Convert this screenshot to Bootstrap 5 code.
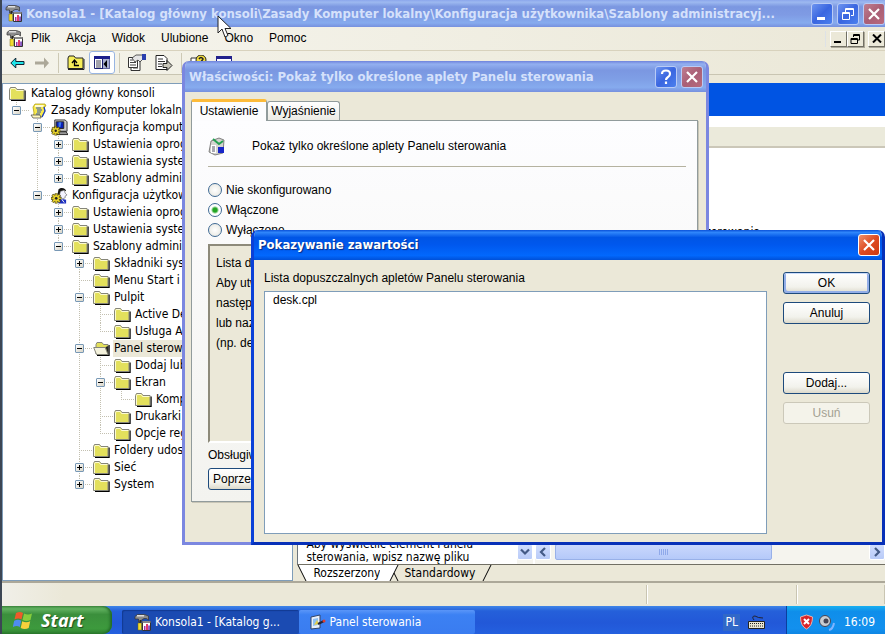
<!DOCTYPE html>
<html lang="pl">
<head>
<meta charset="utf-8">
<title>Konsola1</title>
<meta name="viewport" content="width=device-width, initial-scale=1">
<link href="https://cdn.jsdelivr.net/npm/bootstrap@5.3.0/dist/css/bootstrap.min.css" rel="stylesheet">
<style>
:root{--face:#ebe8d8;--field:#7f9db9}
body{font-family:"DejaVu Sans Condensed","DejaVu Sans",sans-serif;font-size:12px;line-height:17px;color:#000;background:#fff}
button,select{font:inherit;color:inherit}
svg{flex:none;display:block}
.desk{border-left:2px solid #3c4654}
.ms-sans{font-family:"Liberation Sans",sans-serif;font-size:12px}
.caption{font-family:"DejaVu Sans Condensed","DejaVu Sans",sans-serif;font-weight:700;font-size:13px;line-height:20px;white-space:nowrap;color:#d5e1fb}
.title-main{height:27px;padding:0 0 0 3px;gap:4px;background:linear-gradient(#8ba6ec,#9db9f0 8%,#7b97e1 25%,#7f9be4 55%,#86abee 85%,#7690de)}
.cap-btn{width:22px;height:22px;padding:0;border:1px solid #b9cbf6;border-radius:3px;background:linear-gradient(135deg,#6d94f0,#3a66e0 50%,#4b80ee);display:flex;align-items:center;justify-content:center;flex:none}
.cap-dim{background:linear-gradient(135deg,#c07e90,#a95f76 50%,#b8697c)}
.cap-hot{border-color:#fff;background:linear-gradient(135deg,#f0906c,#dd4b22 50%,#cf3a10)}
.menus{height:24px;border-bottom:1px solid #d8d2bd;background:linear-gradient(90deg,#f6f5ee,#ebe8d8)}
.flat{border:0;background:none;padding:0;white-space:nowrap}
.mdi{width:17px;height:16px;padding:0;border:1px solid;border-color:#fff #716f64 #716f64 #fff;box-shadow:1px 1px 0 #aca899;background:var(--face);display:flex;align-items:center;justify-content:center}
.tools{height:24px;background:linear-gradient(90deg,#f4f3ea,#ebe8d8);border-bottom:1px solid #c9c5b2}
.tools .rule{width:1px;height:20px;background:#cdc9b5}
.pressed{width:26px;height:23px;border:1px solid #98b5e2;border-radius:3px;background:#fff}
.workspace{background:var(--face);padding-top:8px;border-bottom:2px solid #aca899}
.tree-pane{flex:0 0 33%;border:1px solid var(--field);background:#fff}
.tree-pane ul{list-style:none;margin:0;padding:0 0 0 21px}
.tree-pane ul.top{padding:1px 0 0 6px}
.tree-pane ul.first{padding-left:0}
.tree-pane ul.first li,.tree-pane li li{background:repeating-linear-gradient(#c3c0b0 0 1px,transparent 1px 2px) 7px 0/1px 100% no-repeat}
.tree-pane li li:last-child{background-size:1px 9px}
.node{display:flex;align-items:center;height:17px;white-space:nowrap}
.node>svg{width:17px}
.node>.twig+svg{margin-right:-1px}
.twig{width:21px;height:17px;flex:none;padding:4px 0 0 3px;background:repeating-linear-gradient(90deg,#c3c0b0 0 1px,transparent 1px 2px) 7px 8px/14px 1px no-repeat}
.knob{display:block;width:9px;height:9px;border:1px solid #7898b5;border-radius:1px;padding:0;background:linear-gradient(#000,#000) center/5px 1px no-repeat,linear-gradient(135deg,#fff,#d8d4c6)}
.knob.shut{background:linear-gradient(#000,#000) center/5px 1px no-repeat,linear-gradient(#000,#000) center/1px 5px no-repeat,linear-gradient(135deg,#fff,#d8d4c6)}
.name{padding:0 3px 0 1px;margin-left:4px}
.chosen{background:var(--face)}
.blueband{height:33px;background:#0054e3}
.colhead{height:21px;margin-top:11px;background:#ebeadb;border-bottom:2px solid #cbc7b8}
.setting-row{padding:76px 125px 0 0;text-align:right}
.panes{gap:2px}
.help-col{flex:0 0 40%;line-height:13px}
.sb{background:#f5f4ee}
.sb-btn{width:16px;height:16px;padding:0;border:1px solid #fff;border-radius:2px;background:linear-gradient(#cfdcfd,#b9cbf8);display:flex;align-items:center;justify-content:center;flex:none}
.thumb{width:62%;border:1px solid #98b0e8;border-radius:2px;background:linear-gradient(#c9d7fc,#b5c9f9)}
.viewtabs{height:17px;border-top:1px solid #716f64}
.status{height:23px;background:linear-gradient(90deg,#f0efe8,#ebe8d8 7%)}
.status span{border-right:1px solid #c9c5b2;box-shadow:1px 0 0 #fff;margin:2px 0}
.status .st-a{flex:0 0 17%}
.status .st-b{flex:0 0 10%}
.win{position:absolute;border-radius:7px 7px 0 0;overflow:hidden;background:var(--face)}
.win-props{left:180px;top:61px;width:527px;height:484px;border:3px solid #7b87e0;border-top:0}
.win-list{left:249px;top:230px;right:0;height:315px;border:3px solid #0a41d8;border-right-color:#0730b8;border-bottom-color:#0730b8;border-top:0}
.win-props header{height:31px;padding:0 3px 0 4px;background:linear-gradient(#6f83dc,#93b0f0 10%,#7b97e1 30%,#7f9fe6 60%,#86abee 85%,#7690de)}
.win-list header{height:30px;padding:0 2px 0 4px;background:linear-gradient(#0a50d8,#2f86fb 8%,#0055e5 25%,#0058ee 50%,#0268fd 85%,#0050d8)}
.win-list .caption{color:#fff;text-shadow:1px 1px 1px #0a2a80}
.props-body{padding:7px 8px 0 6px}
.ptab{border:1px solid #919b9c;border-bottom:0;border-radius:3px 3px 0 0;background:linear-gradient(#fff,#ecebe5);height:19px;width:73px;padding:0}
.ptab.on{height:22px;width:76px;border-top:3px solid #fdbb3a;background:#fcfcfe;margin-bottom:-1px}
.panel{border:1px solid #919b9c;box-shadow:1px 1px 0 #c8c5b6;background:linear-gradient(#fdfdff,#f3f3ef);padding:16px 11px 11px 16px;height:382px}
.cut{height:1px;margin:10px 0 13px;background:#b5b2a0}
.choice{height:20px;gap:4px}
.choice input{appearance:none;width:14px;height:14px;margin:0;border:1px solid #3f6a94;border-radius:50%;background:radial-gradient(#fff,#e4e4dc)}
.choice input:checked{background:radial-gradient(circle,#23a523 0 2px,#fff 4px)}
.sunk{height:199px;border:2px solid;border-color:#8d8a7a #fff #fff #8d8a7a;background:var(--face);padding:7px 6px;line-height:20px}
.xp{height:22px;padding:0;border:1px solid #1d4a7c;border-radius:3px;background:linear-gradient(#fff,#f2f2ec 70%,#dcd9cb)}
.xp.main{box-shadow:inset 0 1px #cbdcfb,inset 2px -2px #93aee8,inset -2px 0 #93aee8}
.xp:disabled{border-color:#cbc8b9;background:#f4f3ea;color:#a3a192}
.list-body{padding:0 12px 8px 10px;gap:16px}
.list-side{padding-top:10px}
.listing{border:1px solid var(--field);border-radius:0;background:#fff;padding:1px 0;outline:0;overflow:hidden}
.listing option{padding:0 8px;min-height:17px;line-height:17px}
.side{flex:0 0 87px;padding-top:12px}
.bar{height:28px;background:linear-gradient(#3f85e8,#2560da 18%,#2258d8 60%,#2460df)}
.start{width:110px;margin-right:10px;padding:0 0 0 11px;gap:8px;border:0;border-radius:0 9px 9px 0;background:linear-gradient(#4f9a4e,#62b261 10%,#3b8f3c 30%,#3d9a3d 80%,#2e7f30);box-shadow:inset -2px 0 3px #226a26;font-family:"Open Sans","Noto Sans",sans-serif;font-style:italic;font-weight:700;font-size:18px;color:#fff;text-shadow:1px 1px 1px #1d4d1f}
.task{flex:0 0 20%;border:0;border-radius:2px;color:#fff;gap:4px;text-align:left;white-space:nowrap;height:24px}
.task.on{background:#1b4bb2;box-shadow:inset 1px 1px 1px #123a92;padding:0 0 0 12px}
.task.off{background:linear-gradient(#5a96f8,#3c81f3 20%,#3a7cf0);padding:0 0 0 11px}
.lang{background:#3168c8;padding:0 2px}
.tray{flex:0 0 99px;background:linear-gradient(#18b0f0,#0f8eea 20%,#1290ee 80%,#0f86e4);border-left:1px solid #0b3f9e}
.pointer{position:absolute;left:215px;top:15px;z-index:3}
</style>
<script src="https://cdn.jsdelivr.net/npm/bootstrap@5.3.0/dist/js/bootstrap.bundle.min.js"></script>
</head>
<body>
<svg width="0" height="0" class="position-absolute" aria-hidden="true">
<defs>
<symbol id="mmc" viewBox="0 0 17 17"><path d="M1 2.500l2.500-2h7l4 1.500v4l-2-1.500L10 4.500 7.500 6v2H4.500V5H1z" fill="#8c8c8c" stroke="#333" stroke-width=".7"/><path d="M3 1.800h7" stroke="#f4f4f4" stroke-width="1.200"/><path d="M5.500 6h1.500v4H5.500z" fill="#222"/><path d="M4 9h3.500v7H4z" fill="#f3dc2c" stroke="#7a6a10" stroke-width=".5"/><path d="M8.500 7.500h8v9h-8z" fill="#fff" stroke="#333"/><path d="M8.500 7h8v2h-8z" fill="#888"/><path d="M10 12h1.500v4H10z" fill="#a432a8"/><path d="M12 10h2v6h-2z" fill="#e23b6b"/><path d="M14.300 11.500h1.500V16h-1.500z" fill="#6a2ab0"/></symbol>
<symbol id="folder" viewBox="0 0 17 14"><path d="M2 13.500h14V3.500" fill="none" stroke="#000" stroke-width="1.400"/><path d="M.5 12.500V2.500l1-2h5l1.500 2h7v10z" fill="#e3e05c" stroke="#85857a"/><path d="M1.500 12V3l.6-1.500h4L7.500 3.500h7" fill="none" stroke="#fffde0" stroke-width=".9"/></symbol>
<symbol id="open" viewBox="0 0 17 14"><path d="M4 13.500h12V3" fill="none" stroke="#000" stroke-width="1.400"/><path d="M3 12V2.500l1-2h5l1.500 2h4.500v10z" fill="#e3e05c" stroke="#85857a"/><path d="M.7 5.500h11.500l2.800 7H3.500z" fill="#f4f2dc" stroke="#85857a"/><path d="M12.500 5l3 7.500V4z" fill="#222"/></symbol>
<symbol id="scroll" viewBox="0 0 17 16"><path d="M5 1h10l1 2-2 1 1 4-3 6H3l1-4-1-6z" fill="#f7e94a" stroke="#a79200" stroke-width=".7"/><path d="M5 2h9l-1 2H5z" fill="#fffbd0"/><path d="M6 5h5M7 7h5M7 9h4M6 11h4" stroke="#2a50c8"/><path d="M1 12h9l1 3H3z" fill="#fff8c0" stroke="#555" stroke-width=".8"/><path d="M14 4l1 4-3 6" stroke="#1b3ec8" stroke-width="1.300" fill="none"/></symbol>
<symbol id="gear" viewBox="0 0 10 10"><path d="M4 0h2v2l2-1 1 1-1 2h2v2H8l1 2-1 1-2-1v2H4V8L2 9 1 8l1-2H0V4h2L1 2l1-1 2 1z" fill="#e8d32c" stroke="#3a3200" stroke-width=".7"/><circle cx="5" cy="5" r="1.300" fill="#222"/></symbol>
<symbol id="pc" viewBox="0 0 18 17"><path d="M4 .5h11l2 2v10H4z" fill="#c9c9c9" stroke="#333"/><path d="M5.500 2.500h8v7h-8z" fill="#0a1fb4" stroke="#222"/><path d="M8 3h3l-1 5H8z" fill="#3d7bf0"/><path d="M5 13h11l2 3H6z" fill="#9a9a9a" stroke="#222"/><use href="#gear" x="0" y="7" width="10" height="10"/></symbol>
<symbol id="user" viewBox="0 0 18 17"><path d="M8 2c3-3 8-1 8 2l-3-1-3 6-3-2z" fill="#141414"/><path d="M10 4l4-1 1 3 2 2-2 1v2l-3 1-3-4z" fill="#f3f3ff" stroke="#555" stroke-width=".6"/><path d="M7 10l4 2 5 1v4H8z" fill="#1c2fc0"/><path d="M11 12l3 4" stroke="#fff"/><use href="#gear" x="0" y="6" width="11" height="11"/></symbol>
<symbol id="flag" viewBox="0 0 20 18"><path d="M3 2q4-2 7 0L8.500 8.500q-3-2-7 0z" fill="#ee5a2a"/><path d="M11 2.500q4 2 8 0L17.500 9q-4 2-8 0z" fill="#86cc3c"/><path d="M1.200 9.800q4-2 7 0L6.800 16q-3-2-7 0z" fill="#4f8cf0"/><path d="M9.200 10.300q4 2 8 0L15.700 17q-4 2-8 0z" fill="#f8d03c"/></symbol>
<symbol id="cross" viewBox="0 0 14 14"><path d="M2 2l10 10M12 2L2 12" stroke="#fff" stroke-width="2.200"/></symbol>
</defs></svg>

<div class="desk vh-100 d-flex flex-column position-relative overflow-hidden">
<header class="title-main d-flex align-items-center flex-shrink-0">
 <svg width="17" height="17"><use href="#mmc"/></svg>
 <div class="caption flex-grow-1 text-truncate">Konsola1 - [Katalog główny konsoli\Zasady Komputer lokalny\Konfiguracja użytkownika\Szablony administracyj...</div>
 <div class="d-flex gap-1">
  <button class="cap-btn" aria-label="Minimalizuj"><svg width="14" height="14"><path d="M2 10h8v3H2z" fill="#fff"/></svg></button>
  <button class="cap-btn" aria-label="Przywróć"><svg width="14" height="14" fill="none" stroke="#fff"><path d="M4.500 5V1.500h8v7H10M4.500 2.500h8M1.500 5.500h7v7h-7zM1.500 6.500h7"/></svg></button>
  <button class="cap-btn cap-dim" aria-label="Zamknij"><svg width="14" height="14"><use href="#cross"/></svg></button>
 </div>
</header>
<nav class="menus d-flex align-items-center flex-shrink-0 ps-1">
 <svg width="17" height="17"><use href="#mmc"/></svg>
 <div class="d-flex flex-grow-1 ms-sans ps-2 gap-3"><button class="flat">Plik</button><button class="flat">Akcja</button><button class="flat">Widok</button><button class="flat">Ulubione</button><button class="flat">Okno</button><button class="flat">Pomoc</button></div>
 <div class="d-flex border-start ps-1">
  <button class="mdi" aria-label="Minimalizuj okno"><svg width="11" height="10"><path d="M1 7h7v2H1z"/></svg></button>
  <button class="mdi me-1" aria-label="Przywróć okno"><svg width="11" height="10" fill="none" stroke="#000"><path d="M3.500 3V.5h6V6H8M3.500 1.500h6M1 4.500h6.500v5H1zM1 5.500h6"/></svg></button>
  <button class="mdi" aria-label="Zamknij okno"><svg width="10" height="9"><path d="M1 .5l8 8M9 .5l-8 8" stroke="#000" stroke-width="2"/></svg></button>
 </div>
</nav>
<div class="tools d-flex align-items-center flex-shrink-0 ps-2">
 <button class="flat" aria-label="Wstecz"><svg width="15" height="12"><path d="M.8 6l5-5v3.500H14v3H5.800V11z" fill="#1fe4e8" stroke="#123"/></svg></button>
 <button class="flat ms-2" aria-label="Dalej"><svg width="17" height="12"><path d="M16 6L11 .5V4.500H2v3h9v4z" fill="#aca899"/></svg></button>
 <span class="rule ms-2 me-2"></span>
 <button class="flat" aria-label="W górę"><svg width="18" height="15"><path d="M1 13.500V3l1-2h5l1.500 2H16v10.500z" fill="#f6ee5a" stroke="#222"/><path d="M1 14.500h16V4" fill="none" stroke="#222"/><path d="M12 10.500H7.500V6M5 8l2.500-3L10 8" fill="none" stroke="#000" stroke-width="1.300"/></svg></button>
 <button class="flat pressed ms-1 d-flex align-items-center justify-content-center" aria-label="Pokaż drzewo"><svg width="16" height="13"><path d="M.5.5h15v12H.5z" fill="#fff" stroke="#1b1f70"/><path d="M0 0h16v3H0z" fill="#1b1f8c"/><path d="M8.500 3v10" stroke="#1b1f70"/><path d="M9 3h6.500v9.500H9z" fill="#aab0d0"/><path d="M2 5h5M2 7h5M2 9h5M2 11h5" stroke="#445"/><path d="M13 4v8L9.500 8z"/></svg></button>
 <span class="rule ms-1 me-2"></span>
 <button class="flat" aria-label="Właściwości"><svg width="19" height="17"><path d="M3 5.500h9v11H3z" fill="#fff" stroke="#333"/><path d="M.5 3.500h9v10h-9z" fill="#fff" stroke="#333"/><path d="M2 6h3M2 8.500h6M2 11h6M5 14h5" stroke="#444"/><path d="M4 4l4-3h7v4l-3 3-2-2-3 2z" fill="#e5e5e5" stroke="#333" stroke-width=".8"/><path d="M14 0h4v6h-4z" fill="#2a3fae"/></svg></button>
 <button class="flat ms-2" aria-label="Eksportuj listę"><svg width="18" height="16"><path d="M1 .5h8l3 3v11H1z" fill="#fff" stroke="#222"/><path d="M3 4h5M3 6.500h7M3 9h4M3 11.500h4" stroke="#333"/><path d="M8 8.500h4V5.500l5 5-5 5v-3H8z" fill="#c9c7bb" stroke="#222"/></svg></button>
 <span class="rule ms-2 me-2"></span>
 <button class="flat" aria-label="Pomoc"><svg width="18" height="16"><path d="M1 3h14v12H1z" fill="#fff" stroke="#333"/><circle cx="11" cy="5" r="5" fill="#f5df3c" stroke="#222"/><path d="M9 4q2-3 4 0l-2 3" fill="none" stroke="#222" stroke-width="1.500"/></svg></button>
 <button class="flat ms-2" aria-label="Nowe okno"><svg width="16" height="14"><path d="M.5.5h15v13H.5z" fill="#fff" stroke="#22228c"/><path d="M0 0h16v3H0z" fill="#22228c"/></svg></button>
</div>

<main class="workspace d-flex flex-grow-1">
 <nav class="tree-pane overflow-hidden" aria-label="Drzewo konsoli">
 <ul class="top"><li>
  <div class="node"><svg width="16" height="14"><use href="#folder"/></svg><span class="name">Katalog główny konsoli</span></div>
  <ul class="first"><li>
   <div class="node"><span class="twig"><button class="knob" aria-label="Zwiń"></button></span><svg width="17" height="16"><use href="#scroll"/></svg><span class="name">Zasady Komputer lokalny</span></div>
   <ul>
   <li><div class="node"><span class="twig"><button class="knob" aria-label="Zwiń"></button></span><svg width="17" height="17"><use href="#pc"/></svg><span class="name">Konfiguracja komputera</span></div>
    <ul>
    <li><div class="node"><span class="twig"><button class="knob shut" aria-label="Rozwiń"></button></span><svg width="16" height="14"><use href="#folder"/></svg><span class="name">Ustawienia oprogramowania</span></div></li>
    <li><div class="node"><span class="twig"><button class="knob shut" aria-label="Rozwiń"></button></span><svg width="16" height="14"><use href="#folder"/></svg><span class="name">Ustawienia systemu Windows</span></div></li>
    <li><div class="node"><span class="twig"><button class="knob shut" aria-label="Rozwiń"></button></span><svg width="16" height="14"><use href="#folder"/></svg><span class="name">Szablony administracyjne</span></div></li>
    </ul></li>
   <li><div class="node"><span class="twig"><button class="knob" aria-label="Zwiń"></button></span><svg width="17" height="17"><use href="#user"/></svg><span class="name">Konfiguracja użytkownika</span></div>
    <ul>
    <li><div class="node"><span class="twig"><button class="knob shut" aria-label="Rozwiń"></button></span><svg width="16" height="14"><use href="#folder"/></svg><span class="name">Ustawienia oprogramowania</span></div></li>
    <li><div class="node"><span class="twig"><button class="knob shut" aria-label="Rozwiń"></button></span><svg width="16" height="14"><use href="#folder"/></svg><span class="name">Ustawienia systemu Windows</span></div></li>
    <li><div class="node"><span class="twig"><button class="knob" aria-label="Zwiń"></button></span><svg width="16" height="14"><use href="#folder"/></svg><span class="name">Szablony administracyjne</span></div>
     <ul>
     <li><div class="node"><span class="twig"><button class="knob shut" aria-label="Rozwiń"></button></span><svg width="16" height="14"><use href="#folder"/></svg><span class="name">Składniki systemu</span></div></li>
     <li><div class="node"><span class="twig"></span><svg width="16" height="14"><use href="#folder"/></svg><span class="name">Menu Start i pasek</span></div></li>
     <li><div class="node"><span class="twig"><button class="knob" aria-label="Zwiń"></button></span><svg width="16" height="14"><use href="#folder"/></svg><span class="name">Pulpit</span></div>
      <ul>
      <li><div class="node"><span class="twig"></span><svg width="16" height="14"><use href="#folder"/></svg><span class="name">Active Desktop</span></div></li>
      <li><div class="node"><span class="twig"></span><svg width="16" height="14"><use href="#folder"/></svg><span class="name">Usługa Active</span></div></li>
      </ul></li>
     <li><div class="node"><span class="twig"><button class="knob" aria-label="Zwiń"></button></span><svg width="16" height="14"><use href="#open"/></svg><span class="name chosen">Panel sterowania</span></div>
      <ul>
      <li><div class="node"><span class="twig"></span><svg width="16" height="14"><use href="#folder"/></svg><span class="name">Dodaj lub usuń</span></div></li>
      <li><div class="node"><span class="twig"><button class="knob" aria-label="Zwiń"></button></span><svg width="16" height="14"><use href="#folder"/></svg><span class="name">Ekran</span></div>
       <ul><li><div class="node"><span class="twig"></span><svg width="16" height="14"><use href="#folder"/></svg><span class="name">Kompozycje</span></div></li></ul></li>
      <li><div class="node"><span class="twig"></span><svg width="16" height="14"><use href="#folder"/></svg><span class="name">Drukarki</span></div></li>
      <li><div class="node"><span class="twig"></span><svg width="16" height="14"><use href="#folder"/></svg><span class="name">Opcje regionalne</span></div></li>
      </ul></li>
     <li><div class="node"><span class="twig"></span><svg width="16" height="14"><use href="#folder"/></svg><span class="name">Foldery udostępnione</span></div></li>
     <li><div class="node"><span class="twig"><button class="knob shut" aria-label="Rozwiń"></button></span><svg width="16" height="14"><use href="#folder"/></svg><span class="name">Sieć</span></div></li>
     <li><div class="node"><span class="twig"><button class="knob shut" aria-label="Rozwiń"></button></span><svg width="16" height="14"><use href="#folder"/></svg><span class="name">System</span></div></li>
     </ul></li>
    </ul></li>
   </ul></li></ul>
 </li></ul>
 </nav>
 <section class="d-flex flex-column flex-grow-1 ps-1">
  <div class="bg-white border-start border-secondary d-flex flex-column flex-grow-1">
   <div class="blueband"></div>
   <div class="panes d-flex flex-grow-1">
    <div class="help-col d-flex">
     <p class="flex-grow-1 m-0 ps-2 d-flex align-items-end">Aby wyświetlić element Panelu<br>sterowania, wpisz nazwę pliku</p>
     <div class="sb d-flex align-items-end pb-1"><button class="sb-btn" aria-label="W dół"><svg width="10" height="8"><path d="M1 1.500l4 4 4-4" fill="none" stroke="#445a86" stroke-width="2.200"/></svg></button></div>
    </div>
    <div class="d-flex flex-column flex-grow-1">
     <div class="colhead"></div>
     <div class="flex-grow-1 setting-row">Pokaż aplety Panelu sterowania</div>
     <div class="sb d-flex pb-1"><button class="sb-btn me-1" aria-label="W lewo"><svg width="8" height="10"><path d="M6 1L2 5l4 4" fill="none" stroke="#445a86" stroke-width="2.200"/></svg></button><div class="thumb d-flex align-items-center justify-content-center"><svg width="9" height="6"><path d="M.5 0v6M2.500 0v6M4.500 0v6M6.500 0v6M8.500 0v6" stroke="#8fa9ea"/></svg></div><button class="sb-btn ms-auto" aria-label="W prawo"><svg width="8" height="10"><path d="M2 1l4 4-4 4" fill="none" stroke="#445a86" stroke-width="2.200"/></svg></button></div>
    </div>
   </div>
  </div>
  <div class="viewtabs d-flex"><svg width="12" height="16"><path d="M1 0h11v16H9z" fill="#fff"/><path d="M1 0l8 16" stroke="#000"/></svg><button class="flat bg-white ps-1">Rozszerzony</button><svg width="20" height="16"><path d="M0 0h18L10 16H0z" fill="#fff"/><path d="M18 0L10 16M14 8l4 8" stroke="#000" fill="none"/></svg><button class="flat ps-1">Standardowy</button><svg width="18" height="16"><path d="M16 0L8 16" stroke="#000"/></svg></div>
 </section>
</main>
<footer class="status d-flex flex-shrink-0"><span class="flex-grow-1"></span><span class="st-a"></span><span class="st-b"></span></footer>

<div class="bar d-flex flex-shrink-0 text-white">
 <button class="start d-flex align-items-center"><svg width="20" height="18"><use href="#flag"/></svg><span>Start</span></button>
 <button class="task on d-flex align-items-center mt-1"><svg width="17" height="17"><use href="#mmc"/></svg><span>Konsola1 - [Katalog g...</span></button>
 <button class="task off d-flex align-items-center mt-1"><svg width="16" height="17"><path d="M1 3l9-2v13l-9 1z" fill="#e9f1fb" stroke="#346"/><path d="M3 5l5-1v7l-5 1z" fill="#8fc0f2"/><path d="M4 11l3-5 2 4z" fill="#e8d04a"/><path d="M8 10l6-3" stroke="#223" stroke-width="2"/><circle cx="14" cy="7" r="1.500" fill="#e03c2c"/></svg><span>Panel sterowania</span></button>
 <div class="d-flex align-items-center ms-auto me-3 pe-1 gap-2 pt-1"><span class="lang">PL</span><svg width="18" height="15"><path d="M6 5q-3-4 1-4 3 2 8 2" fill="none" stroke="#223"/><path d="M.5 6.500h16v7H.5z" fill="#e9e5d2" stroke="#222"/><path d="M2 8.500h13M2 11h13" stroke="#222" stroke-dasharray="1 1"/></svg></div>
 <div class="tray d-flex align-items-center ps-2 pt-1"><svg class="ms-1" width="15" height="16"><path d="M7.500 1l6 2q0 9-6 12Q1.500 12 1.500 3z" fill="#d8242a" stroke="#f0b0a8"/><path d="M5 5l5 5M10 5l-5 5" stroke="#fff" stroke-width="2"/></svg><svg class="ms-1" width="18" height="17"><circle cx="7" cy="7" r="5.500" fill="#c9cdd2" stroke="#445"/><circle cx="8" cy="7" r="2.500" fill="#445"/><path d="M11 16q4-1 5-7" stroke="#7fb4ff" stroke-width="2" fill="none"/></svg><span class="ms-2">16:09</span></div>
</div>

<section class="win win-props d-flex flex-column" aria-label="Właściwości">
 <header class="d-flex align-items-center flex-shrink-0"><span class="caption flex-grow-1">Właściwości: Pokaż tylko określone aplety Panelu sterowania</span>
 <div class="d-flex gap-1"><button class="cap-btn" aria-label="Pomoc"><svg width="14" height="16"><path d="M3 5q0-3.500 4-3.500T11 5q0 2-2.500 3.500Q7 9.500 7 11M7 12.500V15" fill="none" stroke="#fff" stroke-width="2.200"/></svg></button><button class="cap-btn cap-dim" aria-label="Zamknij"><svg width="14" height="14"><use href="#cross"/></svg></button></div></header>
 <div class="props-body ms-sans">
  <div class="d-flex align-items-end"><button class="ptab on">Ustawienie</button><button class="ptab">Wyjaśnienie</button></div>
  <div class="panel">
   <div class="d-flex align-items-center"><svg width="20" height="19"><path d="M3 4l8-3 5 2-1 13-8 2-6-3z" fill="#d4d4d0" stroke="#555" stroke-width=".7"/><path d="M5 2l6 5 4-3" fill="none" stroke="#26a052" stroke-width="2"/><path d="M3 8h5v8H3z" fill="#fff"/><path d="M4 10h3M4 12h3M4 14h3" stroke="#556"/><path d="M10 10h6v6h-6z" fill="#1826c8"/></svg><span class="ms-4">Pokaż tylko określone aplety Panelu sterowania</span></div>
   <div class="cut"></div>
   <label class="choice d-flex align-items-center"><input type="radio" name="stan">Nie skonfigurowano</label>
   <label class="choice d-flex align-items-center"><input type="radio" name="stan" checked>Włączone</label>
   <label class="choice d-flex align-items-center"><input type="radio" name="stan">Wyłączone</label>
   <div class="sunk mt-1">Lista do<br>Aby utw<br>następn<br>lub nazw<br>(np. des</div>
   <div class="mt-1">Obsługiw</div>
   <button class="xp mt-1 px-1">Poprzednie</button>
  </div>
 </div>
</section>

<section class="win win-list d-flex flex-column" aria-label="Pokazywanie zawartości">
 <header class="d-flex align-items-center flex-shrink-0"><span class="caption flex-grow-1">Pokazywanie zawartości</span><button class="cap-btn cap-hot" aria-label="Zamknij"><svg width="14" height="14"><use href="#cross"/></svg></button></header>
 <div class="list-body d-flex flex-grow-1 ms-sans">
  <div class="list-side d-flex flex-column flex-grow-1"><label for="applets" class="mb-1">Lista dopuszczalnych apletów Panelu sterowania</label>
   <select id="applets" class="listing flex-grow-1" size="12"><option>desk.cpl</option></select></div>
  <div class="side d-flex flex-column gap-2"><button class="xp main">OK</button><button class="xp">Anuluj</button><div class="pt-4"></div><button class="xp mt-2">Dodaj...</button><button class="xp" disabled>Usuń</button></div>
 </div>
</section>
<svg class="pointer" width="16" height="24"><path d="M1 1v17l4-4 3 8 3-1.500-3-7h6z" fill="#fff" stroke="#222"/></svg>
</div>
</body>
</html>
